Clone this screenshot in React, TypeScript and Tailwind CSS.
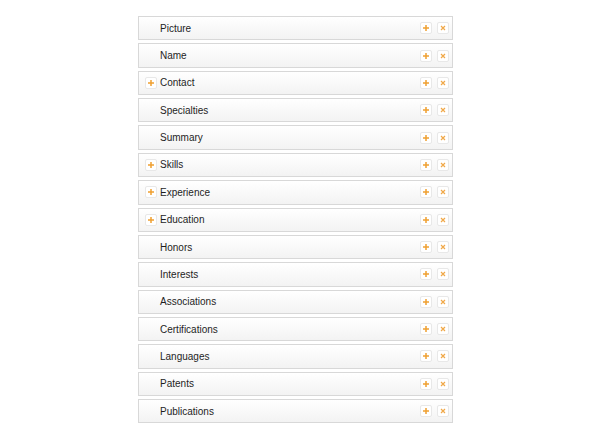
const SECTIONS: { label: string; expandable?: boolean }[] = [
  { label: "Picture" },
  { label: "Name" },
  { label: "Contact", expandable: true },
  { label: "Specialties" },
  { label: "Summary" },
  { label: "Skills", expandable: true },
  { label: "Experience", expandable: true },
  { label: "Education", expandable: true },
  { label: "Honors" },
  { label: "Interests" },
  { label: "Associations" },
  { label: "Certifications" },
  { label: "Languages" },
  { label: "Patents" },
  { label: "Publications" },
];

function PlusBox() {
  return (
    <span className="flex h-[12px] w-[12px] items-center justify-center rounded-[2px] border border-[#e8e8e8] bg-white">
      <svg width="8" height="8" viewBox="0 0 8 8">
        <path d="M4 1v6M1 4h6" stroke="#f0a030" strokeWidth="1.5" />
      </svg>
    </span>
  );
}

function CloseBox() {
  return (
    <span className="flex h-[12px] w-[12px] items-center justify-center rounded-[2px] border border-[#e8e8e8] bg-white">
      <svg width="6" height="6" viewBox="0 0 6 6">
        <path d="M1 1L5 5M5 1L1 5" stroke="#f0a848" strokeWidth="1.2" />
      </svg>
    </span>
  );
}

export default function App() {
  return (
    <div className="min-h-[432px] w-[600px] bg-white pt-[16px] font-['Liberation_Sans',Arial,sans-serif]">
      <ul className="ml-[138px] flex w-[315px] flex-col gap-[3px]">
        {SECTIONS.map((s) => (
          <li
            key={s.label}
            className="flex h-[24.36px] items-center border border-[#d8d8d8] bg-gradient-to-b from-white to-[#f3f3f3] pl-[6px] pr-[3px]"
          >
            <span className="flex w-[15px] items-center">{s.expandable && <PlusBox />}</span>
            <span className="text-[10px] text-[#1e1e1e]">{s.label}</span>
            <span className="ml-auto flex gap-[5px]">
              <PlusBox />
              <CloseBox />
            </span>
          </li>
        ))}
      </ul>
    </div>
  );
}
